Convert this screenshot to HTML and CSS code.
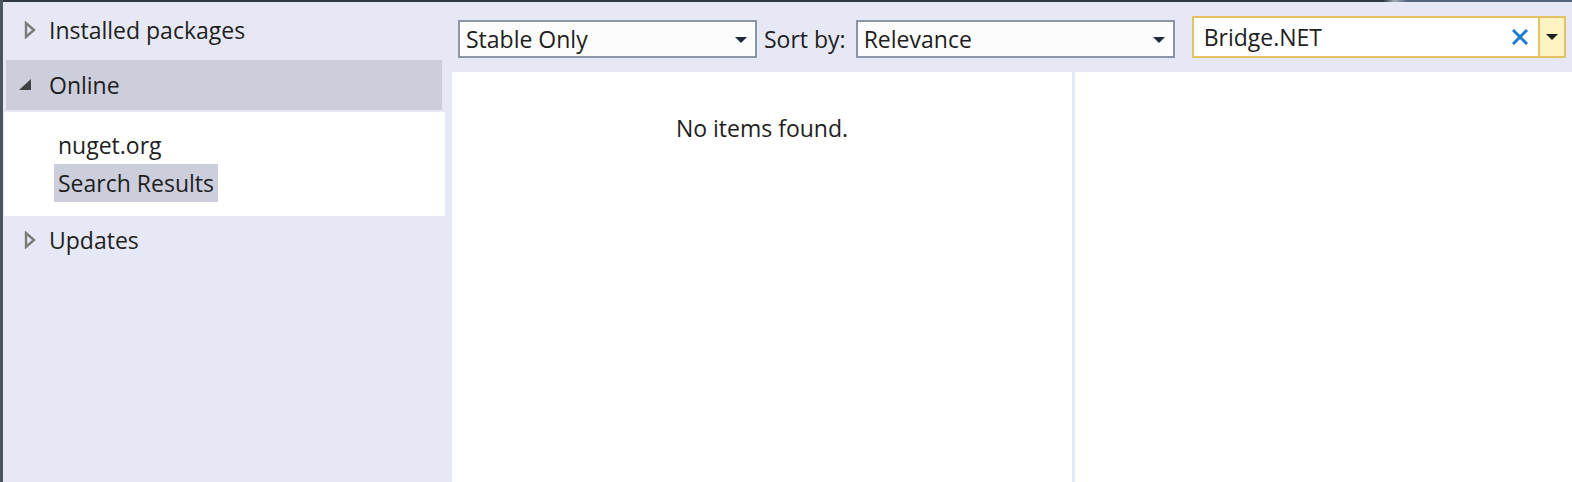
FILE: index.html
```html
<!DOCTYPE html>
<html>
<head>
<meta charset="utf-8">
<link rel="stylesheet" href="styles.css">
</head>
<body>
<div class="window">
  <div class="topline"></div>
  <div class="frame">
    <aside class="sidebar">
      <div class="node">
        <svg class="tri" width="12" height="18" viewBox="0 0 12 18"><polygon points="2,2 2,16 10,9" fill="none" stroke="#7a7a7a" stroke-width="2.4"/></svg>
        <span>Installed packages</span>
      </div>
      <div class="node node-open">
        <svg class="tri-open" width="14" height="13" viewBox="0 0 14 13"><polygon points="13,1 13,12 1,12" fill="#404040"/></svg>
        <span>Online</span>
      </div>
      <div class="children">
        <div class="child">nuget.org</div>
        <div class="child child-sel">Search Results</div>
      </div>
      <div class="node node-last">
        <svg class="tri" width="12" height="18" viewBox="0 0 12 18"><polygon points="2,2 2,16 10,9" fill="none" stroke="#7a7a7a" stroke-width="2.4"/></svg>
        <span>Updates</span>
      </div>
    </aside>
    <main class="main">
      <div class="toolbar">
        <div class="combo combo-filter">
          <span class="combo-text">Stable Only</span>
          <svg class="caret" width="12" height="7" viewBox="0 0 12 7"><polygon points="0,0 12,0 6,6" fill="#1f2a3a"/></svg>
        </div>
        <span class="label">Sort by:</span>
        <div class="combo combo-sort">
          <span class="combo-text">Relevance</span>
          <svg class="caret" width="12" height="7" viewBox="0 0 12 7"><polygon points="0,0 12,0 6,6" fill="#1f2a3a"/></svg>
        </div>
        <div class="search">
          <span class="search-text">Bridge.NET</span>
          <svg class="clear" width="16" height="16" viewBox="0 0 16 16"><path d="M2 2 L14 14 M14 2 L2 14" stroke="#1f78d1" stroke-width="3" stroke-linecap="square"/></svg>
          <div class="search-btn">
            <svg width="12" height="7" viewBox="0 0 12 7"><polygon points="0,0 12,0 6,6" fill="#1e1e1e"/></svg>
          </div>
        </div>
      </div>
      <div class="content">
        <div class="list"><p class="empty">No items found.</p></div>
        <div class="divider"></div>
        <div class="detail"></div>
      </div>
    </main>
  </div>
</div>
</body>
</html>
```

FILE: styles.css
```css
html, body {
  margin: 0;
  padding: 0;
}
body {
  width: 1572px;
  height: 482px;
  overflow: hidden;
  font-family: "Open Sans", "Noto Sans", "Liberation Sans", sans-serif;
  font-size: 23px;
  color: #1e1e1e;
  background: #e6e9f5;
}
.window {
  display: flex;
  flex-direction: column;
  height: 482px;
  border-left: 3px solid #4c5461;
  box-sizing: border-box;
}
.topline {
  height: 2px;
  flex: none;
  background: linear-gradient(to right, #2f3742 0, #2f3742 1380px, #a3abb5 1392px, #56637a 1404px, #56637a 100%);
}
.frame {
  flex: 1;
  display: flex;
  min-height: 0;
}
.sidebar {
  width: 441px;
  flex: none;
  padding: 3px 0 0 1px;
}
.node {
  display: flex;
  align-items: center;
  height: 50px;
  line-height: 1;
}
.node span {
  margin-left: 13px;
}
.tri {
  margin-left: 20px;
  flex: none;
}
.node-open {
  margin: 5px 0 0 2px;
  width: 436px;
  background: #cccedb;
}
.node-open span {
  margin-left: 17px;
}
.tri-open {
  margin-left: 12px;
  margin-bottom: 2px;
  flex: none;
}
.children {
  margin-top: 2px;
  background: #ffffff;
  padding: 14px 0 14px 50px;
  display: flex;
  flex-direction: column;
  align-items: flex-start;
}
.child {
  height: 38px;
  line-height: 38px;
  padding: 0 4px;
}
.child-sel {
  background: #cccedb;
}
.node-last {
  height: 48px;
}
.main {
  flex: 1;
  display: flex;
  flex-direction: column;
  min-width: 0;
  margin-left: 7px;
}
.toolbar {
  height: 70px;
  flex: none;
  display: flex;
  align-items: flex-end;
  padding: 0 0 14px 6px;
  box-sizing: border-box;
}
.combo {
  height: 38px;
  flex: none;
  box-sizing: border-box;
  border: 2px solid #8c95a6;
  background: #fcfcfc;
  display: flex;
  align-items: center;
  padding: 0 8px 0 6px;
}
.combo-text {
  flex: 1;
  line-height: 1;
}
.combo-filter {
  width: 299px;
}
.caret {
  flex: none;
  margin-top: 2px;
}
.label {
  height: 38px;
  line-height: 38px;
  margin: 0 10px 0 7px;
  white-space: nowrap;
}
.combo-sort {
  width: 319px;
}
.search {
  margin-left: 17px;
  width: 374px;
  height: 42px;
  flex: none;
  box-sizing: border-box;
  border: 2px solid #e5c365;
  background: #ffffff;
  display: flex;
  align-items: center;
}
.search-text {
  flex: 1;
  padding-left: 10px;
  line-height: 1;
}
.clear {
  flex: none;
  margin-right: 10px;
}
.search-btn {
  width: 24px;
  height: 100%;
  flex: none;
  border-left: 2px solid #e5c365;
  background: #fef3c1;
  display: flex;
  align-items: center;
  justify-content: center;
}
.content {
  flex: 1;
  display: flex;
  min-height: 0;
}
.list {
  width: 620px;
  flex: none;
  background: #ffffff;
}
.empty {
  margin: 37px 0 0;
  line-height: 38px;
  text-align: center;
}
.divider {
  width: 3px;
  flex: none;
  background: #e6e9f5;
}
.detail {
  flex: 1;
  background: #ffffff;
}
```
